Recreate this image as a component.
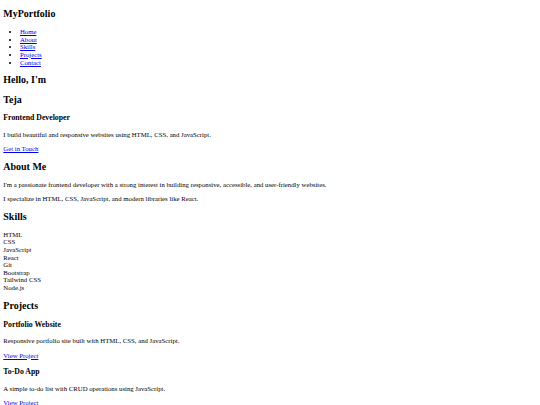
import { FC } from 'react';

// The reference is a browser-default page shown at about 41.6% size,
// so the default UA sizes below are scaled down to match.
const h2 = 'text-[9.98px] leading-[11.48px] font-bold my-[8.29px]';
const h3 = 'text-[7.79px] leading-[8.95px] font-bold my-[7.79px]';
const p = 'my-[6.66px]';
const link = 'text-[#0000ee] underline';

const SKILLS = [
  'HTML',
  'CSS',
  'JavaScript',
  'React',
  'Git',
  'Bootstrap',
  'Tailwind CSS',
  'Node.js',
] as const;

const PROJECTS = [
  {
    title: 'Portfolio Website',
    text: 'Responsive portfolio site built with HTML, CSS, and JavaScript.',
  },
  {
    title: 'To-Do App',
    text: 'A simple to-do list with CRUD operations using JavaScript.',
  },
] as const;

const NAV = ['Home', 'About', 'Skills', 'Projects', 'Contact'] as const;

const App: FC = () => {
  return (
    <div className="m-[3.33px] text-black text-[6.76px] leading-[7.62px] font-['Liberation_Serif','Times_New_Roman',serif]">
      <header>
        <h2 className={h2}>MyPortfolio</h2>
        <nav>
          <ul className="list-disc my-[6.66px] pl-[16.6px]">
            {NAV.map(item => (
              <li key={item}>
                <a href={`#${item.toLowerCase()}`} className={link}>
                  {item}
                </a>
              </li>
            ))}
          </ul>
        </nav>
      </header>

      <section id="home">
        <h2 className={h2}>Hello, I'm</h2>
        <h2 className={h2}>Teja</h2>
        <h3 className={h3}>Frontend Developer</h3>
        <p className={p}>
          I build beautiful and responsive websites using HTML, CSS, and
          JavaScript.
        </p>
        <p className={p}>
          <a href="#contact" className={link}>
            Get in Touch
          </a>
        </p>
      </section>

      <section id="about">
        <h2 className={h2}>About Me</h2>
        <p className={p}>
          I'm a passionate frontend developer with a strong interest in
          building responsive, accessible, and user-friendly websites.
        </p>
        <p className={p}>
          I specialize in HTML, CSS, JavaScript, and modern libraries like
          React.
        </p>
      </section>

      <section id="skills">
        <h2 className={h2}>Skills</h2>
        <div>
          {SKILLS.map(skill => (
            <div key={skill}>{skill}</div>
          ))}
        </div>
      </section>

      <section id="projects">
        <h2 className={h2}>Projects</h2>
        {PROJECTS.map(project => (
          <div key={project.title} className="my-[9.2px]">
            <h3 className={h3}>{project.title}</h3>
            <p className={p}>{project.text}</p>
            <p className={p}>
              <a href="#" className={link}>
                View Project
              </a>
            </p>
          </div>
        ))}
      </section>
    </div>
  );
};

export default App;
